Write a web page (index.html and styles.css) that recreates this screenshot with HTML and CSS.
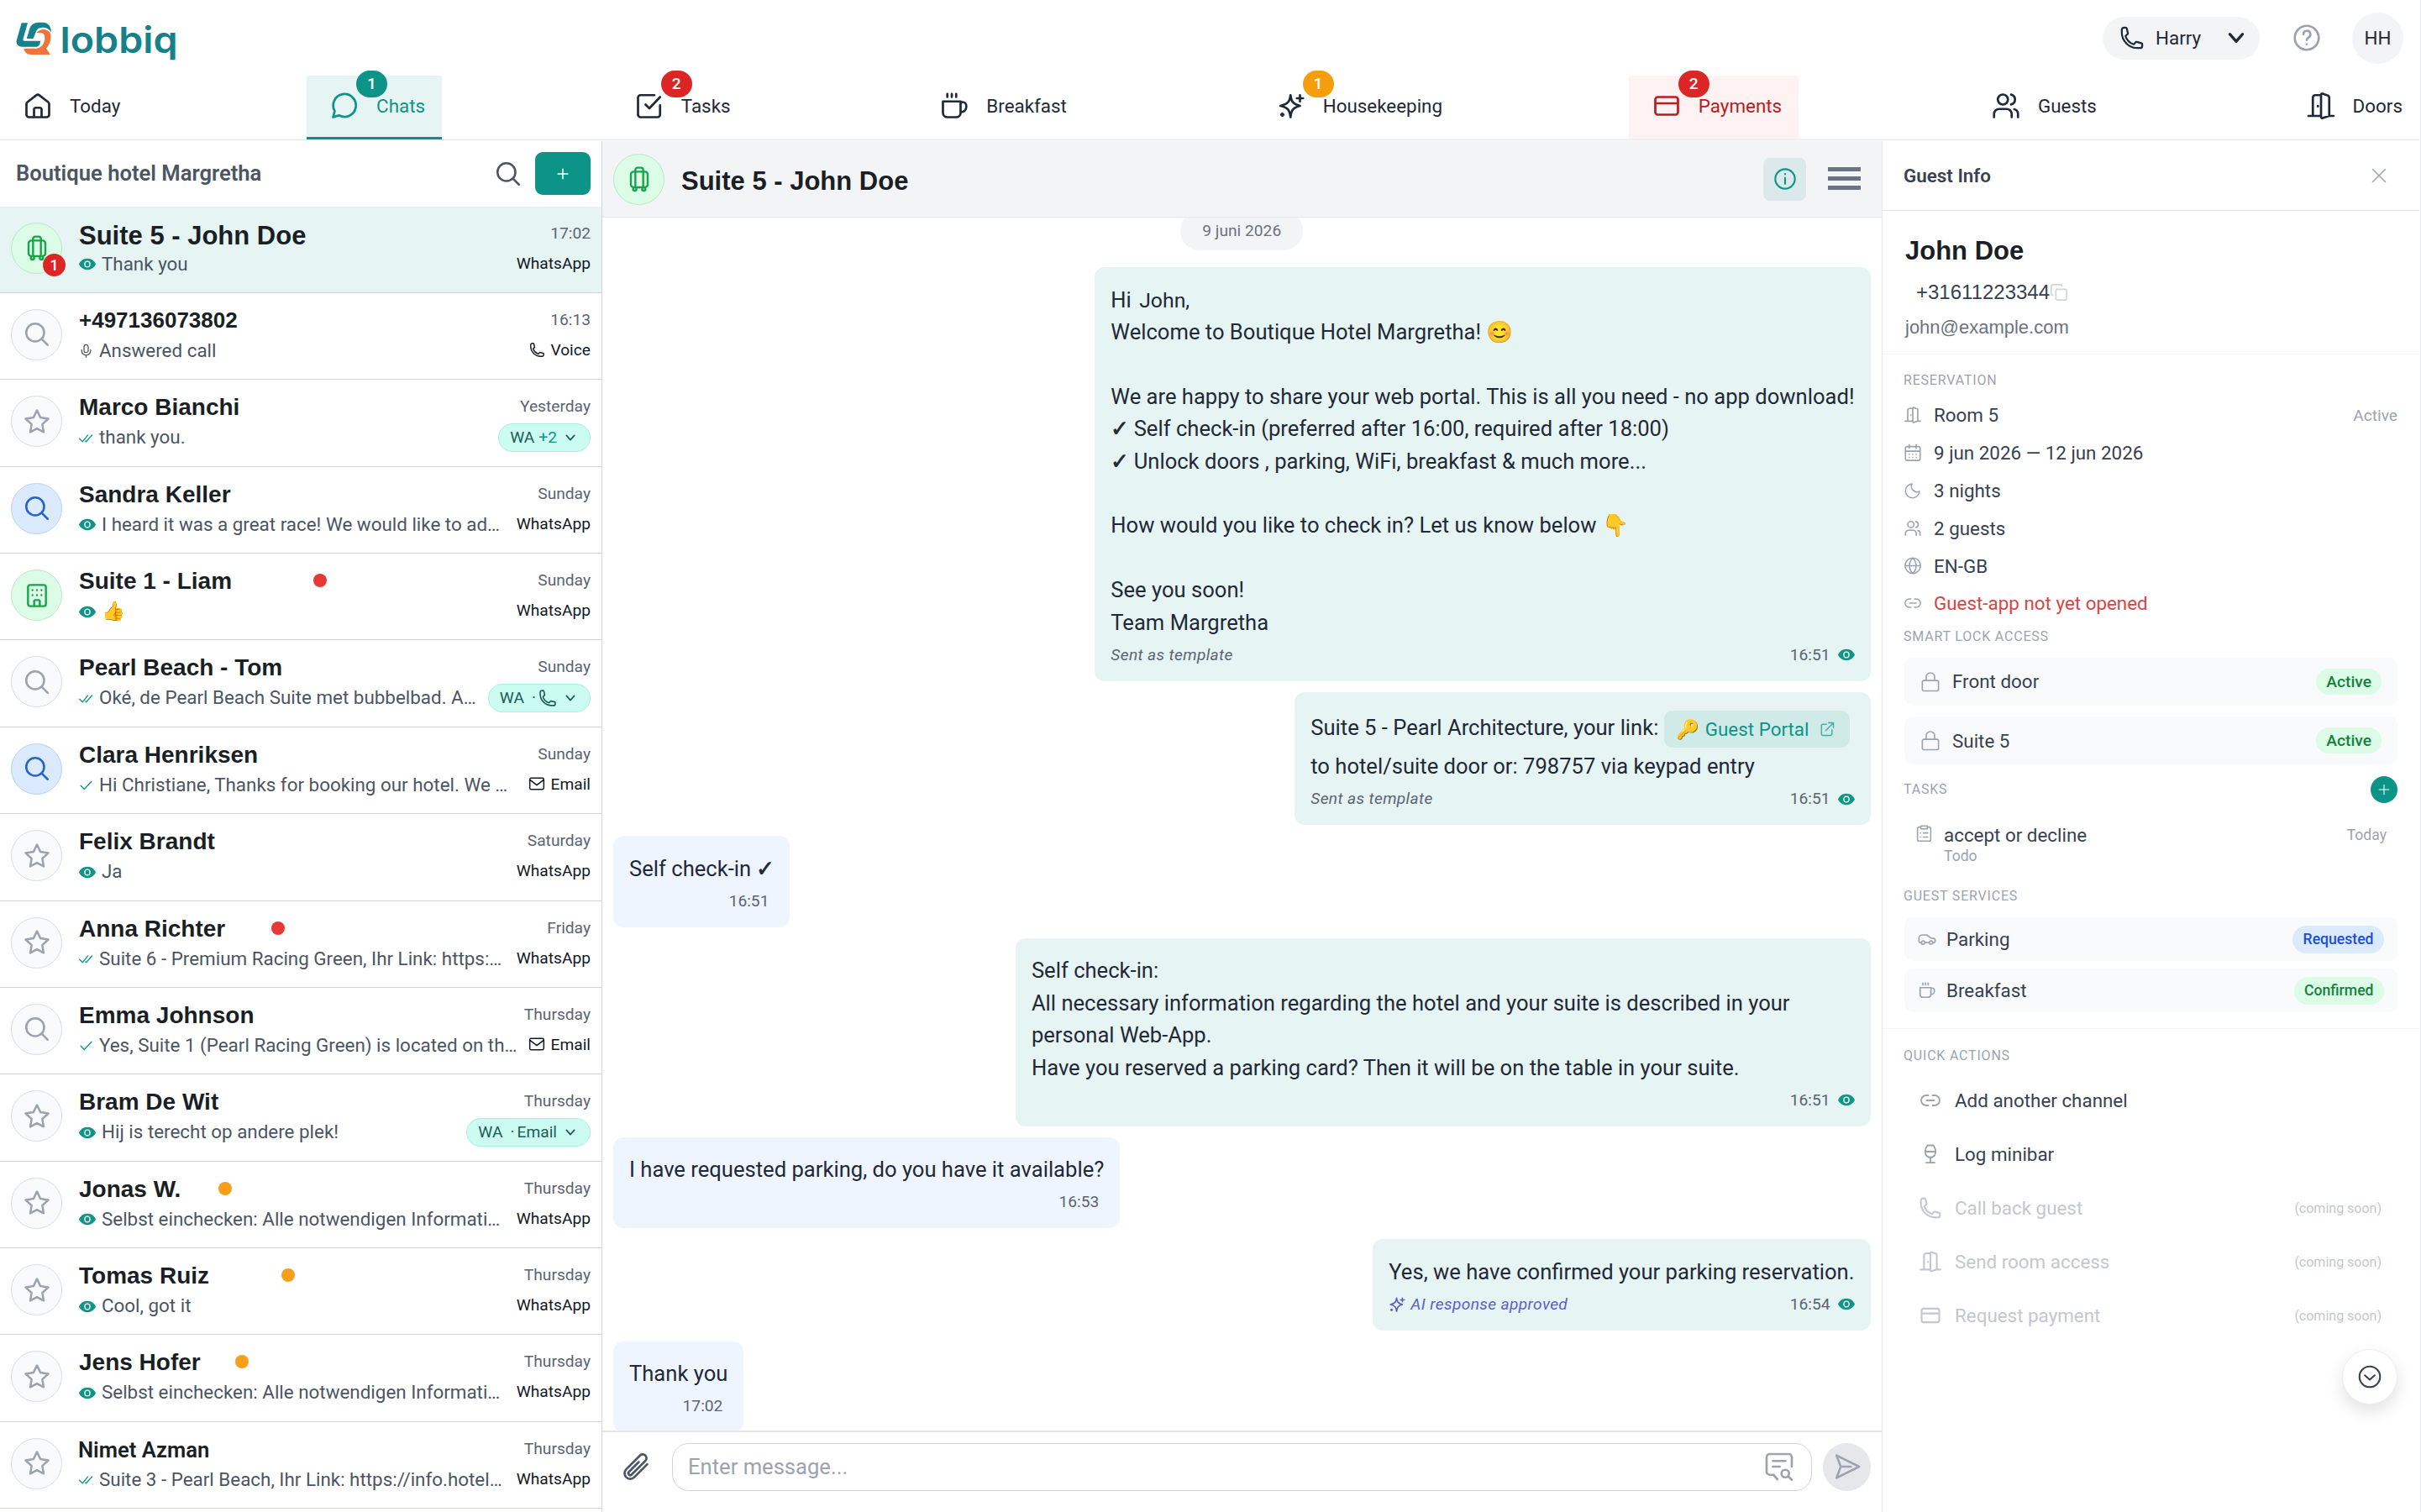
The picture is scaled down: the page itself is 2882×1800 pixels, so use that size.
FILE: index.html
```html
<!DOCTYPE html>
<html lang="en">
<head>
  <meta charset="UTF-8">
  <meta name="viewport" content="width=device-width, initial-scale=1.0">
  <title>lobbiq - Chats</title>
  <link rel="stylesheet" href="styles.css">
</head>
<body>

  <!-- icon sprite -->
  <svg class="sprite" xmlns="http://www.w3.org/2000/svg">
    <symbol id="home" viewBox="0 0 24 24"><path d="M3 10.6a2 2 0 0 1 .8-1.6l7-5.4a2 2 0 0 1 2.4 0l7 5.4a2 2 0 0 1 .8 1.6V19a2 2 0 0 1-2 2H5a2 2 0 0 1-2-2z M9 21v-6a1.5 1.5 0 0 1 1.5-1.5h3A1.5 1.5 0 0 1 15 15v6"/></symbol>
    <symbol id="chat" viewBox="0 0 24 24"><path d="M3 21l1.3-4.900a9 9 0 1 1 3.4 3.4z"/></symbol>
    <symbol id="task" viewBox="0 0 24 24"><path d="M9 11l3 3l8.5-9 M20.5 11.500V19a2 2 0 0 1-2 2H5a2 2 0 0 1-2-2V5.500a2 2 0 0 1 2-2h11"/></symbol>
    <symbol id="coffee" viewBox="0 0 24 24"><path d="M3 8.500h14v9a3.500 3.500 0 0 1-3.500 3.500h-7A3.500 3.500 0 0 1 3 17.500z M17 9h1.500a3 3 0 0 1 3 3v1a4 4 0 0 1-4 4H17 M6.500 2.500v2.500 M10 2.500v2.500 M13.500 2.500v2.500"/></symbol>
    <symbol id="sparkle" viewBox="0 0 24 24"><path d="M11.500 3.500c.6 5 2 7.200 7.500 8.500c-5.500 1.300-6.900 3.500-7.500 9c-.6-5.500-2-7.700-8-9c6-1.300 7.400-3.500 8-8.500z M19 3.500v5 M16.500 6h5 M5 18v2 M4 19h2"/></symbol>
    <symbol id="card" viewBox="0 0 24 24"><path d="M5 5h14a2 2 0 0 1 2 2v10a2 2 0 0 1-2 2H5a2 2 0 0 1-2-2V7a2 2 0 0 1 2-2z M3 10h18"/></symbol>
    <symbol id="users" viewBox="0 0 24 24"><path d="M9.500 3a4 4 0 1 1 0 8a4 4 0 0 1 0-8 M2.500 21v-2.500a4 4 0 0 1 4-4h6a4 4 0 0 1 4 4V21 M16 3.100a4 4 0 0 1 0 7.800 M21.500 21v-2.500a4 4 0 0 0-3-3.800"/></symbol>
    <symbol id="door" viewBox="0 0 24 24"><path d="M2 20h3.500 M18.500 20H22 M5.500 20V5.500a2 2 0 0 1 2-2H12 M12 20H5.500 M12 3.300a1 1 0 0 1 1.200-1l3.300 1.200a2 2 0 0 1 2 2V20l-5.200 1.700a1 1 0 0 1-1.300-1z M9.500 12v.5"/></symbol>
    <symbol id="phone" viewBox="0 0 24 24"><path d="M2.250 6.750c0 8.284 6.716 15 15 15h2.250a2.250 2.250 0 0 0 2.250-2.250v-1.372c0-.516-.351-.966-.852-1.091l-4.423-1.106c-.44-.11-.902.055-1.173.417l-.97 1.293c-.282.376-.769.542-1.210.38a12.035 12.035 0 0 1-7.143-7.143c-.162-.441.004-.928.38-1.210l1.293-.97c.363-.271.527-.734.417-1.173L6.963 3.102a1.125 1.125 0 0 0-1.091-.852H4.500A2.250 2.250 0 0 0 2.250 4.500v2.250z"/></symbol>
    <symbol id="down" viewBox="0 0 24 24"><path d="M5 8l7 8l7-8"/></symbol>
    <symbol id="help" viewBox="0 0 24 24"><path d="M12 2.500a9.500 9.500 0 1 1 0 19a9.500 9.500 0 0 1 0-19 M9.300 9.200a2.800 2.800 0 1 1 4 2.600c-.9.4-1.300 1-1.300 2 M12 17v.1"/></symbol>
    <symbol id="search" viewBox="0 0 24 24"><path d="M10.500 3a7.500 7.500 0 1 1 0 15a7.500 7.500 0 0 1 0-15 M16 16l5 5"/></symbol>
    <symbol id="star" viewBox="0 0 24 24"><path d="M12 17.700l-5.600 3l1.100-6.500l-5-4.700l6.600-1l2.900-6l2.900 6l6.600 1l-5 4.700l1.100 6.500z"/></symbol>
    <symbol id="luggage" viewBox="0 0 24 24"><path d="M7 5.500h10a2.500 2.500 0 0 1 2.500 2.500v9a2.500 2.500 0 0 1-2.500 2.500H7A2.500 2.500 0 0 1 4.500 17V8A2.500 2.500 0 0 1 7 5.500z M8.500 5.500V4A2 2 0 0 1 10.500 2h3a2 2 0 0 1 2 2v1.500 M8.500 6v13 M15.500 6v13 M6.500 21a1.500 1.500 0 1 0 3 0a1.500 1.500 0 1 0-3 0 M14.500 21a1.500 1.500 0 1 0 3 0a1.500 1.500 0 1 0-3 0"/></symbol>
    <symbol id="building" viewBox="0 0 24 24"><path d="M6 2.500h12a2 2 0 0 1 2 2v15a2 2 0 0 1-2 2H6a2 2 0 0 1-2-2v-15a2 2 0 0 1 2-2z M9.500 21v-4a1 1 0 0 1 1-1h3a1 1 0 0 1 1 1v4 M8 7v.1 M12 7v.1 M16 7v.1 M8 11.500v.1 M12 11.500v.1 M16 11.500v.1"/></symbol>
    <symbol id="mic" viewBox="0 0 24 24"><path d="M12 2a3.500 3.500 0 0 1 3.500 3.500v6a3.500 3.500 0 0 1-7 0v-6A3.500 3.500 0 0 1 12 2z M4.500 10.500v1.500a7.500 7.500 0 0 0 15 0v-1.500 M12 19.500V23"/></symbol>
    <symbol id="eye" viewBox="0 0 24 16"><path class="solid" d="M12 0c5.600 0 9.800 3.300 12 8c-2.200 4.700-6.400 8-12 8s-9.800-3.300-12-8c2.200-4.700 6.400-8 12-8z"/><ellipse class="ring" cx="12" cy="8" rx="3.700" ry="4"/></symbol>
    <symbol id="check" viewBox="0 0 24 24"><path d="M3 13l6 6l12-13"/></symbol>
    <symbol id="checks" viewBox="0 0 24 24"><path d="M1 13l5 5l9-11 M11 17l1 1l10-11"/></symbol>
    <symbol id="mail" viewBox="0 0 24 24"><path d="M4 4h16a2 2 0 0 1 2 2v12a2 2 0 0 1-2 2H4a2 2 0 0 1-2-2V6a2 2 0 0 1 2-2z M3 7l9 7l9-7"/></symbol>
    <symbol id="info" viewBox="0 0 24 24"><path d="M12 2a10 10 0 1 1 0 20a10 10 0 0 1 0-20 M12 11v6 M12 7v.2"/></symbol>
    <symbol id="external" viewBox="0 0 24 24"><path d="M11 5H6a2 2 0 0 0-2 2v12a2 2 0 0 0 2 2h11a2 2 0 0 0 2-2v-6 M14 3h7v7 M21 3L10 14"/></symbol>
    <symbol id="close" viewBox="0 0 24 24"><path d="M3 3l18 18 M21 3L3 21"/></symbol>
    <symbol id="copy" viewBox="0 0 24 24"><path d="M10 8h10a2 2 0 0 1 2 2v10a2 2 0 0 1-2 2H10a2 2 0 0 1-2-2V10a2 2 0 0 1 2-2z M4 16a2 2 0 0 1-2-2V4a2 2 0 0 1 2-2h10a2 2 0 0 1 2 2"/></symbol>
    <symbol id="calendar" viewBox="0 0 24 24"><path d="M4.500 4h15a2 2 0 0 1 2 2v14a2 2 0 0 1-2 2h-15a2 2 0 0 1-2-2V6a2 2 0 0 1 2-2z M2.500 10h19 M7.500 1.500V6 M16.500 1.500V6 M7.500 14v.1 M12 14v.1 M16.500 14v.1 M7.500 18v.1 M12 18v.1 M16.500 18v.1"/></symbol>
    <symbol id="moon" viewBox="0 0 24 24"><path d="M11 2.500a7.800 7.800 0 0 0 10.500 10.500A10 10 0 1 1 11 2.500z"/></symbol>
    <symbol id="globe" viewBox="0 0 24 24"><path d="M12 1.500a10.500 10.500 0 1 1 0 21a10.500 10.500 0 0 1 0-21 M1.500 12h21 M12 1.500c-6 6-6 15 0 21 M12 1.500c6 6 6 15 0 21"/></symbol>
    <symbol id="link" viewBox="0 0 24 24"><path d="M9.500 6H7a6 6 0 0 0 0 12h2.500 M14.500 6H17a6 6 0 0 1 0 12h-2.500 M7.500 12h9"/></symbol>
    <symbol id="lock" viewBox="0 0 24 26"><path d="M3.500 11.500h17a2 2 0 0 1 2 2V23a2 2 0 0 1-2 2h-17a2 2 0 0 1-2-2v-9.500a2 2 0 0 1 2-2z M6.500 11V7a5.500 5.500 0 0 1 11 0v4"/></symbol>
    <symbol id="clipboard" viewBox="0 0 24 24"><path d="M7.500 3H5a2 2 0 0 0-2 2v15a2 2 0 0 0 2 2h14a2 2 0 0 0 2-2V5a2 2 0 0 0-2-2h-2.500 M7.500 1.500h9v3.800h-9z M7 11h.1 M11 11h6 M7 16.500h.1 M11 16.500h6"/></symbol>
    <symbol id="car" viewBox="0 0 24 24"><path d="M4.500 16.500H3a1.500 1.500 0 0 1-1.500-1.500v-4c0-3 2-4.500 5-4.500h5l5.500 4l3 .5a2.500 2.500 0 0 1 2.500 2.500v1.500a1.500 1.500 0 0 1-1.500 1.500h-1 M9 16.500h6 M4.700 16.500a2.200 2.200 0 1 0 4.400 0a2.200 2.200 0 1 0-4.400 0 M15 16.500a2.200 2.200 0 1 0 4.400 0a2.200 2.200 0 1 0-4.400 0"/></symbol>
    <symbol id="glass" viewBox="0 0 24 24"><path d="M8.500 1.500h7c2 3 3 6 2.500 8.500a6 6 0 0 1-12 0c-.5-2.500.5-5.500 2.500-8.500z M6 9h12 M12 15.500v6.500 M7 22.200h10"/></symbol>
    <symbol id="circledown" viewBox="0 0 24 24"><path d="M12 1.500a10.500 10.500 0 1 1 0 21a10.500 10.500 0 0 1 0-21 M7 10.500l5 4.500l5-4.500"/></symbol>
    <symbol id="clip" viewBox="0 0 24 24"><path d="M18.375 12.739l-7.693 7.693a4.500 4.500 0 0 1-6.364-6.364l10.940-10.940A3 3 0 1 1 19.500 7.372L8.552 18.320 M14.250 8.379l-7.810 7.810a1.500 1.500 0 0 0 2.112 2.130 M21 10.100l-3 3"/></symbol>
    <symbol id="template" viewBox="0 0 24 24"><path d="M7.500 18.500L10.500 22 M7.500 18.500H4.500a2.500 2.500 0 0 1-2.500-2.500V4.500A2.500 2.500 0 0 1 4.500 2h15A2.500 2.500 0 0 1 22 4.500V12 M7 7.500h10 M7 12h5.500 M16.800 14.500a3 3 0 1 1 0 6a3 3 0 0 1 0-6 M19.500 20l2.500 2.500"/></symbol>
    <symbol id="send" viewBox="0 0 24 24"><path d="M3 2.500l19 9.500l-19 9.500l3.500-9.500z M6.500 12H15"/></symbol>
    <symbol id="plus" viewBox="0 0 24 24"><path d="M12 2v20 M2 12h20"/></symbol>
  </svg>

  <header class="topbar">
    <div class="brand-row">
      <svg class="logo" viewBox="0 0 200 66" width="200" height="66">
        <path fill="#16818a" d="M6.700 8.300H14L8.500 27.500q-.6 2.200 1.500 2.200H29.300q-1 6.500-4.800 7H7.500Q-.5 36.500 .7 29z"/>
        <path fill="#16818a" d="M12.700 27L16.500 14.500Q19 7.700 27 7.700H33Q41.500 8.500 42 19.500Q38 13 31 13.700Q25.500 14 24 18.500L20.500 27z"/>
        <path fill="#f0743a" d="M24.500 20Q28.500 15.300 34 16Q42.500 17.500 41.500 26Q40.500 34 36 38.700L41 46H18Q10.500 45.500 9.300 38.700H24.500Q31 38 33.500 31Q36 22 31 20.300z"/>
        <text x="52.500" y="44" textLength="140" lengthAdjust="spacingAndGlyphs" class="wordmark">lobbiq</text>
      </svg>
      <div class="account">
        <button class="phone-pill"><svg class="i i30"><use href="#phone"/></svg><span>Harry</span><svg class="i i26"><use href="#down"/></svg></button>
        <svg class="i i36 muted help"><use href="#help"/></svg>
        <span class="user">HH</span>
      </div>
    </div>
    <nav class="tabs">
      <a class="tab"><svg class="i i36"><use href="#home"/></svg>Today</a>
      <a class="tab active"><svg class="i i36"><use href="#chat"/></svg>Chats<b class="count teal">1</b></a>
      <a class="tab"><svg class="i i36"><use href="#task"/></svg>Tasks<b class="count red">2</b></a>
      <a class="tab"><svg class="i i36"><use href="#coffee"/></svg>Breakfast</a>
      <a class="tab"><svg class="i i36"><use href="#sparkle"/></svg>Housekeeping<b class="count amber">1</b></a>
      <a class="tab alert"><svg class="i i36"><use href="#card"/></svg>Payments<b class="count red">2</b></a>
      <a class="tab"><svg class="i i36"><use href="#users"/></svg>Guests</a>
      <a class="tab"><svg class="i i36"><use href="#door"/></svg>Doors</a>
    </nav>
  </header>

  <main class="layout">

    <!-- conversation list -->
    <aside class="list">
      <div class="list-head">
        <h2>Boutique hotel Margretha</h2>
        <svg class="i i34"><use href="#search"/></svg>
        <button class="add"><svg class="i i14 bold"><use href="#plus"/></svg></button>
      </div>

      <div class="item selected">
        <div class="avatar green"><svg class="i i32"><use href="#luggage"/></svg><b class="unread">1</b></div>
        <div class="body">
          <div class="line"><span class="name big">Suite 5 - John Doe</span><time>17:02</time></div>
          <div class="line sub"><svg class="eye"><use href="#eye"/></svg><p>Thank you</p><span class="via">WhatsApp</span></div>
        </div>
      </div>
      <div class="item">
        <div class="avatar"><svg class="i i34"><use href="#search"/></svg></div>
        <div class="body">
          <div class="line"><span class="name number">+497136073802</span><time>16:13</time></div>
          <div class="line sub"><svg class="i i17 mic"><use href="#mic"/></svg><p>Answered call</p><span class="via"><svg class="i i19"><use href="#phone"/></svg>Voice</span></div>
        </div>
      </div>
      <div class="item">
        <div class="avatar"><svg class="i i34"><use href="#star"/></svg></div>
        <div class="body">
          <div class="line"><span class="name">Marco Bianchi</span><time>Yesterday</time></div>
          <div class="line sub"><svg class="i i17 tick"><use href="#checks"/></svg><p>thank you.</p><span class="pill">WA <em>+2</em><svg class="i i16 bold"><use href="#down"/></svg></span></div>
        </div>
      </div>
      <div class="item">
        <div class="avatar blue"><svg class="i i34"><use href="#search"/></svg></div>
        <div class="body">
          <div class="line"><span class="name">Sandra Keller</span><time>Sunday</time></div>
          <div class="line sub"><svg class="eye"><use href="#eye"/></svg><p>I heard it was a great race! We would like to ad…</p><span class="via">WhatsApp</span></div>
        </div>
      </div>
      <div class="item">
        <div class="avatar green"><svg class="i i32"><use href="#building"/></svg></div>
        <div class="body">
          <div class="line"><span class="name w-liam">Suite 1 - Liam</span><i class="dot red"></i><time>Sunday</time></div>
          <div class="line sub"><svg class="eye"><use href="#eye"/></svg><p>👍</p><span class="via">WhatsApp</span></div>
        </div>
      </div>
      <div class="item">
        <div class="avatar"><svg class="i i34"><use href="#search"/></svg></div>
        <div class="body">
          <div class="line"><span class="name">Pearl Beach - Tom</span><time>Sunday</time></div>
          <div class="line sub"><svg class="i i17 tick"><use href="#checks"/></svg><p>Oké, de Pearl Beach Suite met bubbelbad. A…</p><span class="pill">WA <span class="sep">·</span><svg class="i i22"><use href="#phone"/></svg><svg class="i i16 bold"><use href="#down"/></svg></span></div>
        </div>
      </div>
      <div class="item">
        <div class="avatar blue"><svg class="i i34"><use href="#search"/></svg></div>
        <div class="body">
          <div class="line"><span class="name">Clara Henriksen</span><time>Sunday</time></div>
          <div class="line sub"><svg class="i i17 tick"><use href="#check"/></svg><p>Hi Christiane, Thanks for booking our hotel. We …</p><span class="via"><svg class="i i20"><use href="#mail"/></svg>Email</span></div>
        </div>
      </div>
      <div class="item">
        <div class="avatar"><svg class="i i34"><use href="#star"/></svg></div>
        <div class="body">
          <div class="line"><span class="name">Felix Brandt</span><time>Saturday</time></div>
          <div class="line sub"><svg class="eye"><use href="#eye"/></svg><p>Ja</p><span class="via">WhatsApp</span></div>
        </div>
      </div>
      <div class="item">
        <div class="avatar"><svg class="i i34"><use href="#star"/></svg></div>
        <div class="body">
          <div class="line"><span class="name w-anna">Anna Richter</span><i class="dot red"></i><time>Friday</time></div>
          <div class="line sub"><svg class="i i17 tick"><use href="#checks"/></svg><p>Suite 6 - Premium Racing Green, Ihr Link: https:…</p><span class="via">WhatsApp</span></div>
        </div>
      </div>
      <div class="item">
        <div class="avatar"><svg class="i i34"><use href="#search"/></svg></div>
        <div class="body">
          <div class="line"><span class="name">Emma Johnson</span><time>Thursday</time></div>
          <div class="line sub"><svg class="i i17 tick"><use href="#check"/></svg><p>Yes, Suite 1 (Pearl Racing Green) is located on th…</p><span class="via"><svg class="i i20"><use href="#mail"/></svg>Email</span></div>
        </div>
      </div>
      <div class="item">
        <div class="avatar"><svg class="i i34"><use href="#star"/></svg></div>
        <div class="body">
          <div class="line"><span class="name">Bram De Wit</span><time>Thursday</time></div>
          <div class="line sub"><svg class="eye"><use href="#eye"/></svg><p>Hij is terecht op andere plek!</p><span class="pill">WA <span class="sep">·</span>Email<svg class="i i16 bold"><use href="#down"/></svg></span></div>
        </div>
      </div>
      <div class="item">
        <div class="avatar"><svg class="i i34"><use href="#star"/></svg></div>
        <div class="body">
          <div class="line"><span class="name w-jonas">Jonas W.</span><i class="dot amber"></i><time>Thursday</time></div>
          <div class="line sub"><svg class="eye"><use href="#eye"/></svg><p>Selbst einchecken: Alle notwendigen Informati…</p><span class="via">WhatsApp</span></div>
        </div>
      </div>
      <div class="item">
        <div class="avatar"><svg class="i i34"><use href="#star"/></svg></div>
        <div class="body">
          <div class="line"><span class="name w-tomas">Tomas Ruiz</span><i class="dot amber"></i><time>Thursday</time></div>
          <div class="line sub"><svg class="eye"><use href="#eye"/></svg><p>Cool, got it</p><span class="via">WhatsApp</span></div>
        </div>
      </div>
      <div class="item">
        <div class="avatar"><svg class="i i34"><use href="#star"/></svg></div>
        <div class="body">
          <div class="line"><span class="name w-jens">Jens Hofer</span><i class="dot amber"></i><time>Thursday</time></div>
          <div class="line sub"><svg class="eye"><use href="#eye"/></svg><p>Selbst einchecken: Alle notwendigen Informati…</p><span class="via">WhatsApp</span></div>
        </div>
      </div>
      <div class="item">
        <div class="avatar"><svg class="i i34"><use href="#star"/></svg></div>
        <div class="body">
          <div class="line"><span class="name plain">Nimet Azman</span><time>Thursday</time></div>
          <div class="line sub"><svg class="i i17 tick"><use href="#checks"/></svg><p>Suite 3 - Pearl Beach, Ihr Link: https://info.hotel…</p><span class="via">WhatsApp</span></div>
        </div>
      </div>
    </aside>

    <!-- chat -->
    <section class="chat">
      <div class="chat-head">
        <div class="avatar green"><svg class="i i32"><use href="#luggage"/></svg></div>
        <h1>Suite 5 - John Doe</h1>
        <button class="info-btn"><svg class="i i28"><use href="#info"/></svg></button>
        <div class="burger"><span></span><span></span><span></span></div>
      </div>

      <div class="messages">
        <div class="day">9 juni 2026</div>

        <div class="msg out">
          <p>Hi <span class="guest">John,</span><br>Welcome to Boutique Hotel Margretha! 😊<br><br>We are happy to share your web portal. This is all you need - no app download!<br><span class="mark">✓</span> Self check-in (preferred after 16:00, required after 18:00)<br><span class="mark">✓</span> Unlock doors , parking, WiFi, breakfast &amp; much more...<br><br>How would you like to check in? Let us know below 👇<br><br>See you soon!<br>Team Margretha</p>
          <div class="meta"><i>Sent as template</i><span>16:51</span><svg class="eye"><use href="#eye"/></svg></div>
        </div>

        <div class="msg out">
          <p>Suite 5 - Pearl Architecture, your link: <a class="chip"><span>🔑</span>Guest Portal<svg class="i i20"><use href="#external"/></svg></a><br>to hotel/suite door or: 798757 via keypad entry</p>
          <div class="meta"><i>Sent as template</i><span>16:51</span><svg class="eye"><use href="#eye"/></svg></div>
        </div>

        <div class="msg in">
          <p>Self check-in <span class="mark">✓</span></p>
          <div class="meta"><span>16:51</span></div>
        </div>

        <div class="msg out">
          <p>Self check-in:<br>All necessary information regarding the hotel and your suite is described in your personal Web-App.<br>Have you reserved a parking card? Then it will be on the table in your suite.</p>
          <div class="meta"><span>16:51</span><svg class="eye"><use href="#eye"/></svg></div>
        </div>

        <div class="msg in">
          <p>I have requested parking, do you have it available?</p>
          <div class="meta"><span>16:53</span></div>
        </div>

        <div class="msg out">
          <p>Yes, we have confirmed your parking reservation.</p>
          <div class="meta"><i class="ai"><svg class="i i22"><use href="#sparkle"/></svg>AI response approved</i><span>16:54</span><svg class="eye"><use href="#eye"/></svg></div>
        </div>

        <div class="msg in">
          <p>Thank you</p>
          <div class="meta"><span>17:02</span></div>
        </div>
      </div>

      <div class="composer">
        <svg class="i i36"><use href="#clip"/></svg>
        <div class="field"><span>Enter message...</span><svg class="i i36"><use href="#template"/></svg></div>
        <button class="send"><svg class="i i34"><use href="#send"/></svg></button>
      </div>
    </section>

    <!-- guest details -->
    <aside class="guest-panel">
      <div class="panel-head"><h3>Guest Info</h3><svg class="i i20"><use href="#close"/></svg></div>
      <div class="contact">
        <h1>John Doe</h1>
        <div class="tel">+31611223344<svg class="i i22"><use href="#copy"/></svg></div>
        <div class="email">john@example.com</div>
      </div>

      <div class="details">
        <h4>Reservation</h4>
        <ul class="facts">
          <li><svg class="i i24"><use href="#door"/></svg>Room 5<small>Active</small></li>
          <li><svg class="i i22"><use href="#calendar"/></svg>9 jun 2026 — 12 jun 2026</li>
          <li><svg class="i i20"><use href="#moon"/></svg>3 nights</li>
          <li><svg class="i i22"><use href="#users"/></svg>2 guests</li>
          <li><svg class="i i21"><use href="#globe"/></svg>EN-GB</li>
          <li class="warn"><svg class="i i20"><use href="#link"/></svg>Guest-app not yet opened</li>
        </ul>

        <h4 class="h-lock">Smart lock access</h4>
        <div class="card lock"><svg class="i i23"><use href="#lock"/></svg>Front door<b class="tag ok">Active</b></div>
        <div class="card lock"><svg class="i i23"><use href="#lock"/></svg>Suite 5<b class="tag ok">Active</b></div>

        <div class="h-tasks"><h4>Tasks</h4><button><svg class="i i14"><use href="#plus"/></svg></button></div>
        <div class="task">
          <svg class="i i21"><use href="#clipboard"/></svg>
          <div>accept or decline<small>Todo</small></div>
          <span>Today</span>
        </div>

        <h4 class="h-services">Guest services</h4>
        <div class="card service"><svg class="i i22"><use href="#car"/></svg>Parking<b class="tag asked">Requested</b></div>
        <div class="card service"><svg class="i i22"><use href="#coffee"/></svg>Breakfast<b class="tag ok">Confirmed</b></div>
      </div>

      <div class="actions">
        <h4>Quick actions</h4>
        <a><svg class="i i24"><use href="#link"/></svg>Add another channel</a>
        <a><svg class="i i24"><use href="#glass"/></svg>Log minibar</a>
        <a class="off"><svg class="i i28"><use href="#phone"/></svg>Call back guest<small>(coming soon)</small></a>
        <a class="off"><svg class="i i28"><use href="#door"/></svg>Send room access<small>(coming soon)</small></a>
        <a class="off"><svg class="i i30"><use href="#card"/></svg>Request payment<small>(coming soon)</small></a>
      </div>

      <button class="to-bottom"><svg class="i i28"><use href="#circledown"/></svg></button>
    </aside>
  </main>

</body>
</html>
```
FILE: styles.css
```css
* {
  box-sizing: border-box;
}

body {
  margin: 0;
  width: 2882px;
  height: 1800px;
  padding-right: 1px;
  border-right: 1px solid #e5e7eb;
  overflow: hidden;
  font-family: Roboto, sans-serif;
  font-size: 22.4px;
  color: #1f2937;
  background: #fff;
}

h1, h2, h3, h4, p, ul {
  margin: 0;
  padding: 0;
}

button {
  font: inherit;
  border: none;
  padding: 0;
  display: flex;
  align-items: center;
  justify-content: center;
}

.sprite {
  display: none;
}

/* icons */
.i {
  flex: none;
  fill: none;
  stroke: currentColor;
  stroke-width: 1.8;
  stroke-linecap: round;
  stroke-linejoin: round;
}

.bold { stroke-width: 2.6; }
.i14 { width: 14px; height: 14px; }
.i16 { width: 16px; height: 16px; }
.i17 { width: 17px; height: 17px; }
.i19 { width: 19px; height: 19px; }
.i20 { width: 20px; height: 20px; }
.i21 { width: 21px; height: 21px; }
.i22 { width: 22px; height: 22px; }
.i23 { width: 22px; height: 25px; }
.i24 { width: 24px; height: 24px; }
.i26 { width: 26px; height: 26px; }
.i28 { width: 28px; height: 28px; }
.i30 { width: 30px; height: 30px; }
.i32 { width: 32px; height: 32px; }
.i34 { width: 34px; height: 34px; }
.i36 { width: 36px; height: 36px; }

.eye {
  flex: none;
  width: 20px;
  height: 15px;
  fill: #0f9488;
}

.ring {
  fill: none;
  stroke: #fff;
  stroke-width: 1.6;
}

.muted { color: #9ca3af; }

/* top bar */
.topbar {
  height: 168px;
}

.brand-row {
  display: flex;
  justify-content: space-between;
  height: 90px;
  padding: 19px 19px 0;
}

.wordmark {
  font: 600 43px Inter, sans-serif;
  fill: #16818a;
}

.account {
  display: flex;
  align-items: center;
  height: 52px;
}

.phone-pill {
  width: 187px;
  height: 51px;
  border-radius: 26px;
  background: #f3f4f6;
  color: #1f2937;
  justify-content: flex-start;
  padding-left: 20px;
}

.phone-pill span {
  margin: 0 29px 0 13px;
}

.phone-pill .i26 { stroke-width: 3; }

.help {
  margin: 0 36px 0 38px;
}

.user {
  width: 61px;
  height: 61px;
  border-radius: 50%;
  background: #f3f4f6;
  display: flex;
  align-items: center;
  justify-content: center;
}

.tabs {
  display: flex;
  justify-content: space-between;
  height: 77px;
  border-bottom: 1px solid #e5e7eb;
}

.tab {
  position: relative;
  display: flex;
  align-items: center;
  gap: 20px;
  height: 76px;
  padding: 0 20px 4px 27px;
}

.tab.active {
  background: #e6f4f3;
  color: #0d9488;
  border-bottom: 3px solid #0f8f85;
  padding-bottom: 1px;
}

.tab.alert {
  background: #fef2f2;
  color: #b91c1c;
}

.count {
  position: absolute;
  left: 59px;
  top: -6px;
  width: 37px;
  height: 32px;
  border-radius: 16px;
  color: #fff;
  font-size: 19.2px;
  font-weight: 500;
  line-height: 32px;
  text-align: center;
}

.count.teal { background: #0d9488; }
.red { background: #dc2626; }
.amber { background: #f59e0b; }

.layout {
  display: grid;
  grid-template-columns: 717px 1523px 1fr;
  height: 1632px;
}

/* conversation list */
.list {
  border-right: 1px solid #d1d5db;
  overflow: hidden;
}

.list-head {
  display: flex;
  align-items: center;
  height: 77.6px;
  padding: 0 13px 0 19px;
  color: #4b5563;
}

.list-head h2 {
  flex: 1;
  padding-bottom: 1px;
  font-size: 25.6px;
  font-weight: 600;
}

.add {
  width: 66px;
  height: 51px;
  margin-left: 15px;
  border-radius: 9px;
  background: #0d9488;
  color: #fff;
}

.item {
  display: flex;
  height: 103.38px;
  padding: 19px 13px 0;
  border-bottom: 1px solid #d1d5db;
}

.item.selected {
  background: #e6f4f3;
}

.avatar {
  position: relative;
  flex: none;
  display: flex;
  align-items: center;
  justify-content: center;
  width: 61px;
  height: 61px;
  border: 1px solid #d9dce1;
  border-radius: 50%;
  background: #f9fafb;
  color: #9ca3af;
}

.avatar.green {
  background: #dcfce7;
  border-color: #bbe8cb;
  color: #16a34a;
}

.avatar.blue {
  background: #dbeafe;
  border-color: #b9d2f3;
  color: #2563c9;
}

.unread {
  position: absolute;
  left: 37px;
  top: 36px;
  width: 27px;
  height: 27px;
  border-radius: 50%;
  background: #dc2626;
  color: #fff;
  font-size: 18px;
  font-weight: 500;
  line-height: 27px;
  text-align: center;
}

.body {
  flex: 1;
  margin-left: 20px;
}

.line {
  display: flex;
  align-items: center;
  height: 26px;
  white-space: nowrap;
}

.name {
  padding-top: 2px;
  font: bold 28px "Liberation Sans", Arial, sans-serif;
  color: #1a1f26;
}

.name.big { font-size: 31px; padding-top: 6px; }
.name.number { font-size: 26px; }
.name.plain { font: 600 25.6px Roboto, sans-serif; margin-left: -1px; }
.w-liam { width: 279px; }
.w-anna { width: 229px; }
.w-jonas { width: 166px; }
.w-tomas { width: 241px; }
.w-jens { width: 186px; }

.dot {
  width: 16px;
  height: 16px;
  border-radius: 50%;
}

.dot.red { background: #e53935; }
.dot.amber { background: #f79e1b; }

.line time {
  margin-left: auto;
  padding-bottom: 1px;
  font-size: 19.2px;
  color: #5b6472;
}

.sub {
  height: 34px;
  margin-top: 7px;
  color: #4b5563;
}

.sub p {
  margin-left: 7px;
  padding-bottom: 2px;
}

.tick { color: #0d9488; }

.via {
  display: flex;
  align-items: center;
  gap: 6px;
  margin-left: auto;
  padding-bottom: 3px;
  font-size: 19.2px;
  color: #111827;
}

.pill {
  display: flex;
  align-items: center;
  height: 34px;
  margin-left: auto;
  padding: 0 15px 1px 13px;
  border: 1px solid #a5f0e2;
  border-radius: 17px;
  background: #ccfbf1;
  font-size: 19.2px;
  color: #1b5e58;
}

.pill em {
  margin-left: 5px;
  font-style: normal;
  color: #0d9488;
}

.pill .bold { margin-left: 8px; }
.sep { margin: 0 3px 0 9px; }

/* chat */
.chat {
  display: flex;
  flex-direction: column;
  min-width: 0;
  height: 1632px;
}

.chat-head {
  display: flex;
  align-items: center;
  height: 91px;
  flex: none;
  padding: 0 25px 0 13px;
  background: #f3f4f6;
  border-bottom: 1px solid #e5e7eb;
}

.chat-head h1 {
  flex: 1;
  margin-left: 20px;
  padding-top: 6px;
  font: bold 31px "Liberation Sans", Arial, sans-serif;
  color: #1a1f26;
}

.info-btn {
  width: 51px;
  height: 51px;
  border-radius: 8px;
  background: #dbe9ea;
  color: #0d9488;
}

.burger {
  display: grid;
  gap: 6px;
  width: 39px;
  margin-left: 26px;
  padding-bottom: 1px;
}

.burger span {
  height: 5px;
  background: #6b7280;
}

.messages {
  display: flex;
  flex-direction: column;
  gap: 13px;
  height: 1444px;
  flex: none;
  padding: 0 13.5px 0 13px;
  overflow: hidden;
}

.day {
  align-self: center;
  margin: -8px 0 7px;
  padding: 0 26px;
  border-radius: 23px;
  background: #f3f4f6;
  color: #6b7280;
  font-size: 19.2px;
  line-height: 47px;
  flex: none;
}

.msg {
  flex: none;
  max-width: 68%;
  padding: 19.6px 19px;
  border-radius: 12px;
  font-size: 25.6px;
  line-height: 38.4px;
}

.msg.out {
  align-self: flex-end;
  background: #e6f4f3;
}

.msg.in {
  align-self: flex-start;
  background: #eff5ff;
}

.msg .guest {
  margin-left: 3px;
  font-size: 24.8px;
  line-height: 1;
}

.mark {
  letter-spacing: -1px;
  line-height: 1;
  -webkit-text-stroke: .8px currentColor;
}

.meta {
  display: flex;
  align-items: center;
  height: 31px;
  padding-top: 8px;
  font-size: 19.2px;
  line-height: 24px;
  color: #5b6472;
}

.meta i { letter-spacing: .35px; }
.meta span { margin-left: auto; }
.meta .eye { margin-left: 9px; }
.in .meta { padding-right: 6px; }

.meta .ai {
  display: flex;
  align-items: center;
  gap: 5px;
  margin-left: -1px;
  color: #5b5fc7;
}

.chip {
  display: inline-flex;
  align-items: center;
  height: 44px;
  margin: 3px 6px 3px 0;
  padding: 0 17px 0 14px;
  border-radius: 10px;
  background: #d0eae7;
  color: #0d9488;
  font-size: 22.4px;
  vertical-align: middle;
}

.chip span { margin-right: 7px; }
.chip .i { margin-left: 11px; opacity: .7; }

.composer {
  display: flex;
  align-items: center;
  flex: 1;
  padding: 0 13px 13px 22px;
  border-top: 2px solid #e5e7eb;
  color: #4b5563;
}

.field {
  flex: 1;
  display: flex;
  align-items: center;
  justify-content: space-between;
  height: 57px;
  margin: 0 13px 0 25px;
  padding: 0 20px 0 18px;
  border: 1px solid #d1d5db;
  border-radius: 20px;
  font-size: 25.6px;
  color: #9ca3af;
}

.send {
  width: 57px;
  height: 57px;
  border-radius: 50%;
  background: #e5e7eb;
  color: #9ca3af;
}

/* guest details */
.guest-panel {
  position: relative;
  border-left: 1px solid #e5e7eb;
  color: #374151;
}

.panel-head {
  display: flex;
  align-items: center;
  justify-content: space-between;
  height: 83px;
  padding: 0 38px 0 25px;
  border-bottom: 1px solid #e5e7eb;
  color: #9ca3af;
}

.panel-head h3 {
  font-size: 22.4px;
  font-weight: 600;
  color: #374151;
}

.contact {
  height: 171px;
  padding: 30px 27px 0;
  border-bottom: 1px solid #f3f4f6;
  font-family: "Liberation Sans", Arial, sans-serif;
}

.contact h1 {
  font-size: 31px;
  line-height: 36px;
  color: #1a1f26;
}

.tel {
  display: flex;
  align-items: center;
  height: 48px;
  margin: 7px 0 0 13px;
  font-size: 24px;
}

.tel svg { color: #d1d5db; }

.email {
  height: 36px;
  line-height: 36px;
  font-size: 22px;
  color: #6b7280;
}

h4 {
  font-size: 16px;
  font-weight: 400;
  letter-spacing: .8px;
  line-height: 20px;
  text-transform: uppercase;
  color: #9ca3af;
}

.details {
  height: 803px;
  padding: 21px 26px 0 25px;
  border-bottom: 1px solid #f3f4f6;
}

.facts {
  list-style: none;
  margin-top: 9px;
}

.facts li {
  display: flex;
  align-items: center;
  height: 44.8px;
}

.facts .i {
  width: 22px;
  margin-right: 14px;
  color: #9ca3af;
}

.facts small {
  margin-left: auto;
  font-size: 19.2px;
  color: #9ca3af;
}

.facts .warn { color: #d64545; }

.h-lock { margin: 7px 0 15px; }

.card {
  display: flex;
  align-items: center;
  margin-left: 1px;
  border-radius: 10px;
  background: #f9fafb;
}

.card .i { color: #9ca3af; }

.lock {
  height: 57px;
  margin-bottom: 13.5px;
  padding: 0 19px 0 20px;
}

.lock .i { margin-right: 15px; }

.tag {
  margin-left: auto;
  border-radius: 17px;
  font-weight: 500;
}

.tag.ok { background: #dcfce7; color: #15803d; }
.tag.asked { background: #dbeafe; color: #1d4ed8; }

.lock .tag {
  padding: 0 12px;
  font-size: 19.2px;
  line-height: 31px;
}

.h-tasks {
  display: flex;
  align-items: center;
  justify-content: space-between;
  height: 32px;
}

.h-tasks button {
  width: 32px;
  height: 32px;
  border-radius: 50%;
  background: #0d9488;
  color: #fff;
}

.task {
  display: flex;
  margin-top: 25px;
  height: 76px;
  padding: 0 13px 0 14px;
  line-height: 26px;
}

.task > .i {
  margin: 1px 13px 0 0;
  color: #9ca3af;
}

.task small {
  display: block;
  font-size: 17.6px;
  line-height: 25px;
  color: #9ca3af;
}

.task span {
  margin-left: auto;
  font-size: 17.6px;
  color: #9ca3af;
}

.h-services { margin-bottom: 15.5px; }

.service {
  height: 51.5px;
  margin-bottom: 9.5px;
  padding: 0 16px;
}

.service .i { margin-right: 12px; }

.service .tag {
  padding: 0 12.5px;
  font-size: 17.6px;
  line-height: 33px;
}

.actions {
  padding: 22px 45px 0 25px;
}

.actions h4 { margin-bottom: 11px; }

.actions a {
  display: flex;
  align-items: center;
  height: 64.1px;
  padding-left: 18px;
}

.actions .i {
  width: 28px;
  margin-right: 15px;
  color: #9ca3af;
}

.actions small {
  margin-left: auto;
  font-size: 16px;
}

.actions .off, .actions .off .i { color: #c3c7ce; }

.to-bottom {
  position: absolute;
  left: 547px;
  top: 1438px;
  width: 66px;
  height: 66px;
  border: 1px solid #eceef0;
  border-radius: 50%;
  background: #fff;
  color: #374151;
  box-shadow: 0 8px 20px rgba(0, 0, 0, .12);
}
```
